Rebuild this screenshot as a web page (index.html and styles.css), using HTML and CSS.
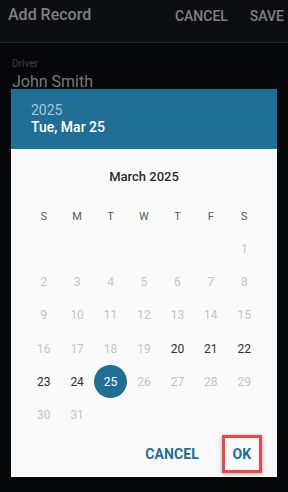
FILE: index.html
```html
<!DOCTYPE html>
<html>
<head>
<meta charset="utf-8">
<link rel="stylesheet" href="styles.css">
</head>
<body>
<div class="screen">
  <div class="appbar">
    <div class="title">Add Record</div>
    <div class="actions">
      <span class="action">CANCEL</span>
      <span class="action">SAVE</span>
    </div>
  </div>
  <div class="form">
    <div class="label">Driver</div>
    <div class="value">John Smith</div>
  </div>

  <div class="dialog">
    <div class="dlg-header">
      <div class="year">2025</div>
      <div class="date">Tue, Mar 25</div>
    </div>
    <div class="dlg-body">
      <div class="month">March 2025</div>
      <div class="dow">
        <span>S</span><span>M</span><span>T</span><span>W</span><span>T</span><span>F</span><span>S</span>
      </div>
      <div class="days">
        <span></span><span></span><span></span><span></span><span></span><span></span><span class="off">1</span>
        <span class="off">2</span><span class="off">3</span><span class="off">4</span><span class="off">5</span><span class="off">6</span><span class="off">7</span><span class="off">8</span>
        <span class="off">9</span><span class="off">10</span><span class="off">11</span><span class="off">12</span><span class="off">13</span><span class="off">14</span><span class="off">15</span>
        <span class="off">16</span><span class="off">17</span><span class="off">18</span><span class="off">19</span><span>20</span><span>21</span><span>22</span>
        <span>23</span><span>24</span><span class="sel"><i>25</i></span><span class="off">26</span><span class="off">27</span><span class="off">28</span><span class="off">29</span>
        <span class="off">30</span><span class="off">31</span><span></span><span></span><span></span><span></span><span></span>
      </div>
    </div>
    <div class="dlg-buttons">
      <span class="btn">CANCEL</span>
      <span class="btn btn-ok">OK</span>
    </div>
  </div>
</div>
</body>
</html>
```
FILE: styles.css
```css
* { box-sizing: border-box; }
html, body {
  margin: 0;
  padding: 0;
  background: #060709;
  font-family: Roboto, "Noto Sans", sans-serif;
}
.screen {
  position: relative;
  width: 288px;
  height: 492px;
  overflow: hidden;
  background: #060709;
}
.appbar {
  height: 43px;
  display: flex;
  align-items: flex-start;
  justify-content: space-between;
  padding: 5px 4px 0 8px;
  background: #0d0e11;
  border-bottom: 1px solid #222327;
}
.title {
  font-size: 16px;
  font-weight: 500;
  color: #7e7f82;
  line-height: 20px;
}
.actions {
  display: flex;
  gap: 22px;
  padding-top: 1px;
}
.action {
  font-size: 14px;
  font-weight: 500;
  color: #7e7f82;
  line-height: 20px;
}
.form {
  padding: 15px 12px 0 12px;
}
.label {
  font-size: 10px;
  color: #3e3f43;
  line-height: 12px;
}
.value {
  font-size: 16px;
  color: #77787b;
  line-height: 20px;
  margin-top: 2px;
}
.dialog {
  position: absolute;
  left: 11px;
  top: 89px;
  width: 266px;
  height: 388px;
  background: #fafafa;
  display: flex;
  flex-direction: column;
}
.dlg-header {
  height: 60px;
  background: #1f6f96;
  padding: 13px 20px 0 20px;
}
.year {
  font-size: 14px;
  line-height: 16px;
  color: #a9c7d6;
}
.date {
  font-size: 14px;
  font-weight: 500;
  line-height: 18px;
  color: #ffffff;
}
.dlg-body {
  padding: 18px 16px 0 16px;
}
.month {
  text-align: center;
  font-size: 13px;
  font-weight: 500;
  color: #2a2a2a;
  line-height: 20px;
}
.dow {
  margin-top: 13px;
  display: grid;
  grid-template-columns: repeat(7, 1fr);
  height: 32px;
  align-items: center;
  justify-items: center;
  font-size: 11px;
  color: #5a5a5a;
}
.days {
  display: grid;
  grid-template-columns: repeat(7, 1fr);
  grid-auto-rows: 33.33px;
  align-items: center;
  justify-items: center;
  font-size: 12px;
  color: #2e2e2e;
}
.days .off { color: #c4c4c4; }
.days .sel i {
  font-style: normal;
  width: 33px;
  height: 33px;
  border-radius: 50%;
  background: #1f6f96;
  color: #ffffff;
  display: flex;
  align-items: center;
  justify-content: center;
}
.dlg-buttons {
  flex: 1;
  display: flex;
  justify-content: flex-end;
  align-items: center;
  padding: 0 15px 0 0;
}
.btn {
  font-size: 14px;
  font-weight: 700;
  color: #1f6f96;
  letter-spacing: 0.1px;
}
.btn-ok {
  margin-left: 23px;
  width: 40px;
  height: 38px;
  border: 3px solid #ef4646;
  box-shadow: 0 1px 4px rgba(0,0,0,0.35);
  display: flex;
  align-items: center;
  justify-content: center;
}
```
